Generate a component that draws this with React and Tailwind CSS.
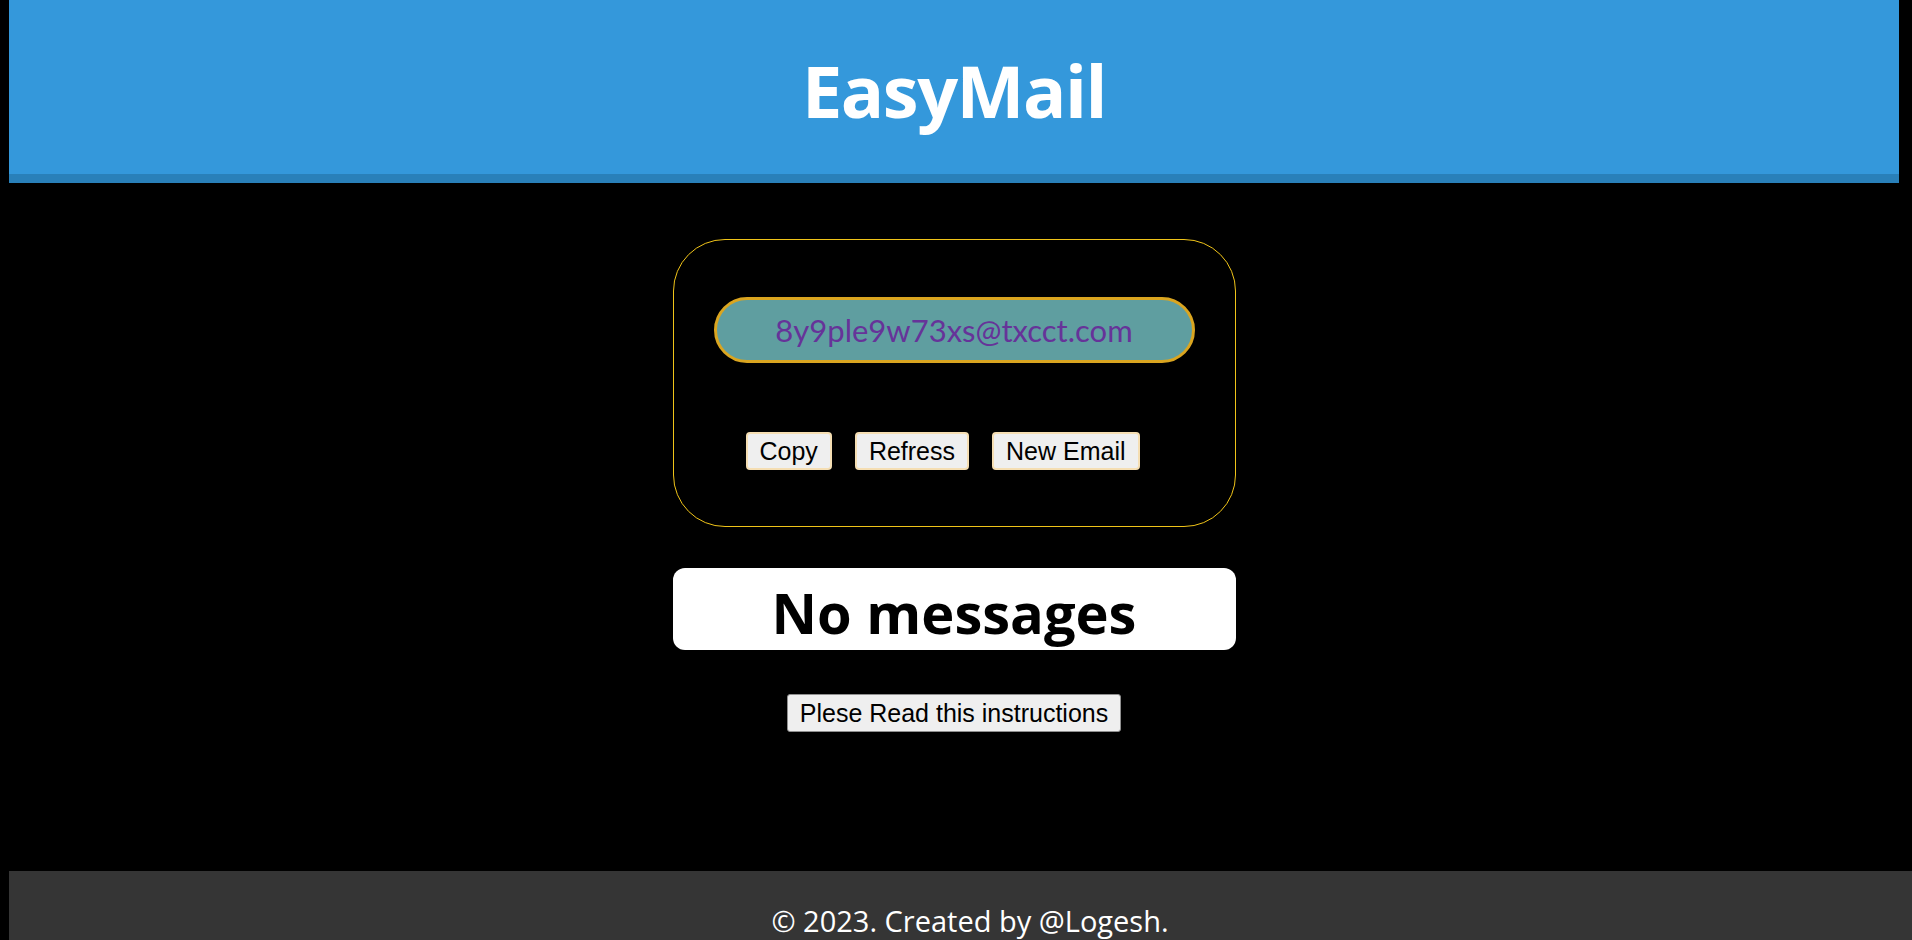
import React from "react";

const btn =
  "h-[38px] px-[12px] bg-[#efefef] border-2 border-[#f5deb3] rounded-[4px] text-[25px] leading-none text-black font-['Liberation_Sans',Arial,sans-serif]";

export default function App() {
  return (
    <div className="h-[940px] bg-black overflow-hidden">
      <header className="ml-[9px] mr-[13px] h-[183px] bg-[#3498db] border-b-[9px] border-[#2980b9] flex items-center justify-center">
        <h1 className="text-white font-bold text-[72px] leading-none tracking-[-1.5px] pt-[6px] font-['Open_Sans','Noto_Sans',sans-serif]">
          EasyMail
        </h1>
      </header>

      <main className="flex flex-col items-center pl-[9px] pr-[13px]">
        <section className="mt-[56px] w-[563px] h-[288px] border border-[#f0c419] rounded-[52px] flex flex-col items-center">
          <div className="mt-[57px] w-[481px] h-[66px] rounded-full bg-[#5f9ea0] border-[3px] border-[#daa520] flex items-center justify-center text-[#663399] text-[31px] leading-none font-['Lato','Open_Sans',sans-serif]">
            8y9ple9w73xs@txcct.com
          </div>
          <div className="self-start ml-[72px] mt-[69px] flex gap-[23px]">
            <button className={btn}>Copy</button>
            <button className={btn}>Refress</button>
            <button className={btn}>New Email</button>
          </div>
        </section>

        <div className="mt-[41px] w-[563px] h-[82px] bg-white rounded-[12px] flex items-center justify-center">
          <h2 className="text-black font-bold text-[56px] leading-none pt-[6px] font-['Open_Sans','Noto_Sans',sans-serif]">
            No messages
          </h2>
        </div>

        <button className="mt-[44px] h-[38px] px-[12px] bg-[#efefef] border border-[#8f8f8f] rounded-[3px] text-[25px] leading-none text-black font-['Liberation_Sans',Arial,sans-serif]">
          Plese Read this instructions
        </button>
      </main>

      <footer className="mt-[139px] ml-[9px] w-[1922px] h-[80px] bg-[#353535] flex justify-center pt-[35px]">
        <p className="text-white text-[29px] leading-none font-['Open_Sans','Noto_Sans',sans-serif]">
          © 2023. Created by @Logesh.
        </p>
      </footer>
    </div>
  );
}
